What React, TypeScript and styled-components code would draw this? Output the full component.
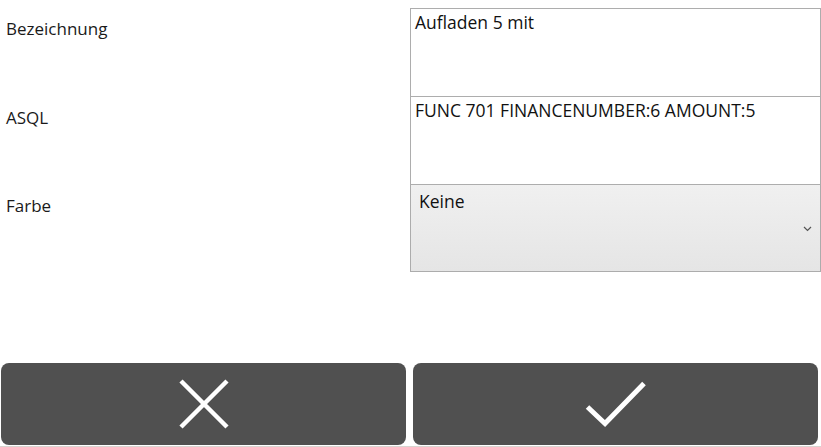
import React from "react";
import styled, { createGlobalStyle } from "styled-components";

const Global = createGlobalStyle`
  html, body { margin: 0; padding: 0; background: #ffffff; }
  body { font-family: "Open Sans", "Noto Sans", "Liberation Sans", sans-serif; }
`;

const Page = styled.div`
  width: 821px;
  height: 447px;
  display: flex;
  flex-direction: column;
  box-sizing: border-box;
  padding-top: 8px;
  overflow: hidden;
`;

const Form = styled.div`
  display: grid;
  grid-template-columns: 410px 411px;
  grid-auto-rows: auto;
`;

const Label = styled.div`
  font-size: 17px;
  color: #1a1a1a;
  padding: 10px 0 0 6px;
  line-height: 22px;
`;

const TextBox = styled.div<{ $first?: boolean }>`
  box-sizing: border-box;
  height: ${(p) => (p.$first ? 89 : 88)}px;
  border: 1px solid #adadad;
  border-top: ${(p) => (p.$first ? "1px solid #adadad" : "none")};
  background: #ffffff;
  padding: 2px 4px;
  font-size: 17.5px;
  line-height: 22px;
  color: #111111;
  white-space: nowrap;
`;

const Combo = styled.div`
  box-sizing: border-box;
  height: 87px;
  border: 1px solid #acacac;
  border-top: none;
  background: linear-gradient(#f0f0f0, #e5e5e5);
  padding: 5px 8px;
  font-size: 17.5px;
  line-height: 22px;
  color: #111111;
  display: flex;
  justify-content: space-between;
  align-items: flex-start;
`;

const Chevron = styled.svg`
  align-self: center;
  margin-top: 2px;
`;

const Spacer = styled.div`
  flex: 1;
`;

const ButtonBar = styled.div`
  display: grid;
  grid-template-columns: 405px 405px;
  column-gap: 7px;
  padding: 0 0 1px 1px;
  border-bottom: 1px solid #d8d4d0;
`;

const ActionButton = styled.button`
  height: 82px;
  border: none;
  border-radius: 8px;
  background: #505050;
  display: flex;
  align-items: center;
  justify-content: center;
  padding: 0;
  cursor: pointer;
`;

export default function App() {
  return (
    <>
      <Global />
      <Page>
        <Form>
          <Label>Bezeichnung</Label>
          <TextBox $first>Aufladen 5 mit</TextBox>
          <Label>ASQL</Label>
          <TextBox>FUNC 701 FINANCENUMBER:6 AMOUNT:5</TextBox>
          <Label>Farbe</Label>
          <Combo>
            <span>Keine</span>
            <Chevron width="9" height="6" viewBox="0 0 9 6">
              <path d="M1 1 L4.5 4.5 L8 1" fill="none" stroke="#555" strokeWidth="1.2" />
            </Chevron>
          </Combo>
        </Form>
        <Spacer />
        <ButtonBar>
          <ActionButton aria-label="Abbrechen">
            <svg width="50" height="50" viewBox="0 0 50 50">
              <path d="M2 2 L48 48 M48 2 L2 48" stroke="#ffffff" strokeWidth="4.5" fill="none" />
            </svg>
          </ActionButton>
          <ActionButton aria-label="OK">
            <svg width="62" height="46" viewBox="0 0 62 46">
              <path d="M2.5 26 L20 42.5 L59 2.5" stroke="#ffffff" strokeWidth="5" fill="none" />
            </svg>
          </ActionButton>
        </ButtonBar>
      </Page>
    </>
  );
}
